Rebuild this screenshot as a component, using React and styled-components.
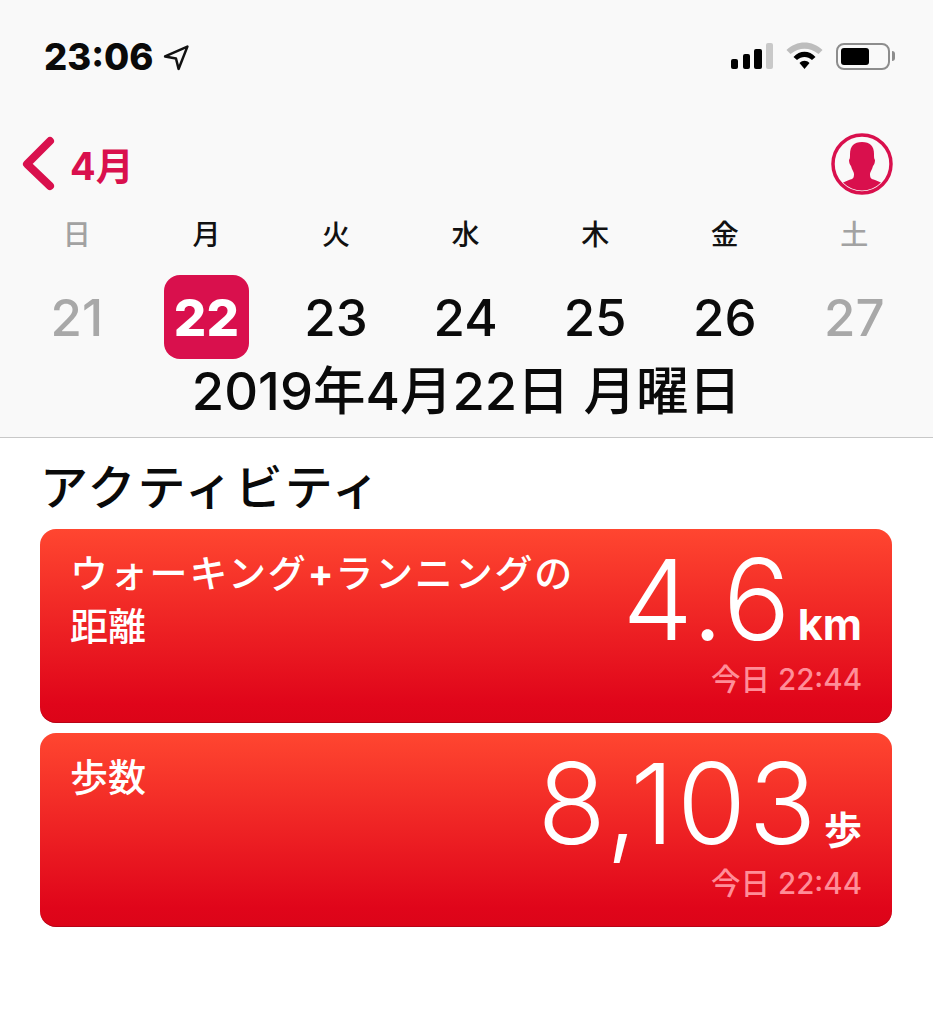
import React from 'react'
import styled, { createGlobalStyle } from 'styled-components'

const GlobalStyle = createGlobalStyle`
  html, body {
    margin: 0;
    padding: 0;
    background: #fff;
  }
  body {
    font-family: 'Inter', 'Liberation Sans', 'Noto Sans CJK JP', sans-serif;
  }
`

const week = [
  { name: '日', day: 21, off: true },
  { name: '月', day: 22, active: true },
  { name: '火', day: 23 },
  { name: '水', day: 24 },
  { name: '木', day: 25 },
  { name: '金', day: 26 },
  { name: '土', day: 27, off: true },
]

const App = () => {
  return (
    <Page>
      <GlobalStyle />
      <Header>
        <StatusBar>
          <Clock>
            23:06
            <svg width="27" height="27" viewBox="0 0 26 26">
              <path d="M2 12 L23.500 2.500 L15 24 L12.500 14 Z" fill="none" stroke="#111" strokeWidth="2.400" strokeLinejoin="round" />
            </svg>
          </Clock>
          <StatusIcons>
            <svg width="42" height="26" viewBox="0 0 42 26">
              <rect x="0" y="16" width="7" height="10" rx="2" fill="#000" />
              <rect x="12" y="11" width="7" height="15" rx="2" fill="#000" />
              <rect x="23" y="6" width="8" height="20" rx="2" fill="#000" />
              <rect x="35" y="0" width="7" height="26" rx="2" fill="#c9c9c9" />
            </svg>
            <svg width="37" height="28" viewBox="0 0 36 28">
              <path d="M0 8 C10 -2 26 -2 36 8 L32 12 C23 5 13 5 4 12 Z" fill="#bdbdbd" />
              <path d="M7 15 C13 8 23 8 29 15 L25.500 18 C21 14 15 14 10.500 18 Z" fill="#000" />
              <path d="M13 21 C16 18 20 18 23 21 L18 27 Z" fill="#000" />
            </svg>
            <Battery>
              <BatteryLevel />
              <BatteryCap />
            </Battery>
          </StatusIcons>
        </StatusBar>
        <NavRow>
          <BackLink>
            <svg width="36" height="56" viewBox="0 0 36 56">
              <path d="M30 5 L7 28 L30 50" fill="none" stroke="#d9104d" strokeWidth="8" strokeLinecap="round" strokeLinejoin="round" />
            </svg>
            <BackLabel>4月</BackLabel>
          </BackLink>
          <svg width="62" height="62" viewBox="0 0 62 62">
            <defs>
              <clipPath id="avatar-clip">
                <circle cx="31" cy="31" r="26.500" />
              </clipPath>
            </defs>
            <circle cx="31" cy="31" r="29" fill="none" stroke="#d9104d" strokeWidth="3.500" />
            <g clipPath="url(#avatar-clip)" fill="#d9104d">
              <path d="M31 9 C39 9 43 13 43 21 C43 24 43 26 44 27 C44 30 43 32 42 33 C41 37 39 39 39 41 C39 45 40 46 44 47 C49 49 53 51 56 53 L56 62 L6 62 L6 53 C9 51 13 49 18 47 C22 46 23 45 23 41 C23 39 21 37 20 33 C19 32 18 30 18 27 C19 26 19 24 19 21 C19 13 23 9 31 9 Z" />
            </g>
          </svg>
        </NavRow>
        <WeekGrid>
          {week.map(item => (
            <DayColumn key={item.day}>
              <DayName $off={item.off}>{item.name}</DayName>
              <DayNumber $off={item.off} $active={item.active}>{item.day}</DayNumber>
            </DayColumn>
          ))}
        </WeekGrid>
        <DateTitle>2019年4月22日 月曜日</DateTitle>
      </Header>
      <Content>
        <SectionTitle>アクティビティ</SectionTitle>
        <Card>
          <CardTitle $tracked>ウォーキング<b>+</b>ランニングの<br /><span>距離</span></CardTitle>
          <CardValue>
            <ValueRow><BigNumber>4.6</BigNumber><Unit $latin>km</Unit></ValueRow>
            <Stamp>今日 22:44</Stamp>
          </CardValue>
        </Card>
        <Card>
          <CardTitle>歩数</CardTitle>
          <CardValue>
            <ValueRow><BigNumber>8,103</BigNumber><Unit>歩</Unit></ValueRow>
            <Stamp>今日 22:44</Stamp>
          </CardValue>
        </Card>
      </Content>
    </Page>
  )
}

const Page = styled.div`
  width: 933px;
  height: 1024px;
  overflow: hidden;
  background: #fff;
`

const Header = styled.header`
  height: 438px;
  box-sizing: border-box;
  background: #f9f9f9;
  border-bottom: 1px solid #c8c8c8;
`

const StatusBar = styled.div`
  height: 133px;
  box-sizing: border-box;
  padding: 38px 36px 0 44px;
  display: flex;
  justify-content: space-between;
  align-items: flex-start;
`

const Clock = styled.div`
  display: flex;
  align-items: center;
  gap: 9px;
  font-size: 36.500px;
  line-height: 38px;
  font-weight: 800;
  color: #0a0a0a;
`

const StatusIcons = styled.div`
  display: flex;
  align-items: center;
  gap: 13px;
  padding-top: 4px;
`

const Battery = styled.div`
  position: relative;
  width: 54px;
  height: 27px;
  padding: 3px;
  box-sizing: border-box;
  border: 2px solid #8d8d8d;
  border-radius: 8px;
  margin-right: 7px;
`

const BatteryLevel = styled.div`
  width: 28px;
  height: 100%;
  background: #000;
  border-radius: 3px;
`

const BatteryCap = styled.div`
  position: absolute;
  right: -7px;
  top: 6px;
  width: 3px;
  height: 10px;
  background: #8d8d8d;
  border-radius: 0 3px 3px 0;
`

const NavRow = styled.div`
  height: 62px;
  padding: 0 40px 0 20px;
  display: flex;
  justify-content: space-between;
  align-items: center;
`

const BackLink = styled.div`
  display: flex;
  align-items: center;
  gap: 14px;
`

const BackLabel = styled.span`
  padding-top: 3px;
  font-size: 38px;
  line-height: 52px;
  font-weight: 700;
  color: #d9104d;
`

const WeekGrid = styled.div`
  padding: 0 13px 0 12px;
  display: grid;
  grid-template-columns: repeat(7, 129.6px);
  margin-top: 23px;
`

const DayColumn = styled.div`
  display: flex;
  flex-direction: column;
  align-items: center;
`

const DayName = styled.div`
  font-size: 28px;
  line-height: 34px;
  font-weight: 500;
  color: ${props => (props.$off ? '#a2a2a2' : '#111')};
`

const DayNumber = styled.div`
  margin-top: 23px;
  width: 85px;
  height: 84px;
  display: flex;
  align-items: center;
  justify-content: center;
  border-radius: 16px;
  font-size: 51px;
  font-weight: ${props => (props.$active ? 800 : 500)};
  color: ${props => (props.$active ? '#fff' : props.$off ? '#a8a8a8' : '#0b0b0b')};
  background: ${props => (props.$active ? '#d9104d' : 'transparent')};
`

const DateTitle = styled.div`
  height: 64px;
  text-align: center;
  font-size: 52.500px;
  line-height: 64px;
  font-weight: 500;
  white-space: nowrap;
  color: #0a0a0a;
`

const Content = styled.main`
  padding: 0 41px 0 40px;
  display: flex;
  flex-direction: column;
`

const SectionTitle = styled.h2`
  margin: 23px 0 14px 0;
  font-size: 48px;
  line-height: 54px;
  letter-spacing: 2px;
  font-weight: 500;
  color: #0a0a0a;
`

const Card = styled.section`
  height: 194px;
  box-sizing: border-box;
  margin-bottom: 10px;
  padding: 18px 30px 0 30px;
  display: flex;
  justify-content: space-between;
  border-radius: 16px;
  color: #fff;
  background: linear-gradient(180deg, #ff4630 0%, #e0051a 90%, #dc0418 100%);
  box-shadow: inset 0 -1px 0 rgba(140, 0, 20, 0.45);
`

const CardTitle = styled.div`
  font-size: 38px;
  line-height: 53px;
  font-weight: 500;
  letter-spacing: ${props => (props.$tracked ? '1.800px' : '0')};
  white-space: nowrap;
  b {
    font-weight: 700;
  }
  span {
    letter-spacing: 0;
  }
`

const CardValue = styled.div`
  display: flex;
  flex-direction: column;
  align-items: flex-end;
`

const ValueRow = styled.div`
  display: flex;
  align-items: baseline;
  gap: 5px;
`

const BigNumber = styled.span`
  font-size: 112px;
  line-height: 104px;
  letter-spacing: 2.500px;
  font-weight: 350;
`

const Unit = styled.span`
  font-size: ${props => (props.$latin ? '43px' : '38px')};
  font-weight: 700;
`

const Stamp = styled.div`
  margin-top: 10px;
  font-size: 29.500px;
  line-height: 36px;
  font-weight: 500;
  white-space: nowrap;
  color: #ff8d98;
`

export default App
